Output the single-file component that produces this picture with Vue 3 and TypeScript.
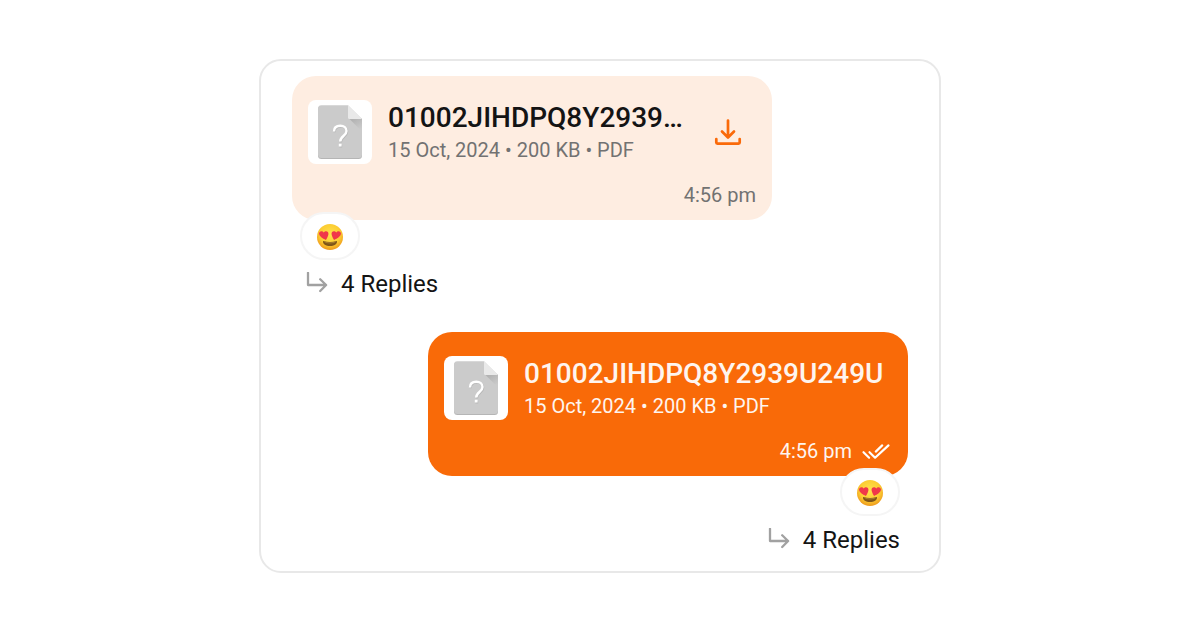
<script setup lang="ts">
interface Message {
  id: number
  direction: 'incoming' | 'outgoing'
  name: string
  details: string
  time: string
  replies: number
}

const messages: Message[] = [
  {
    id: 1,
    direction: 'incoming',
    name: '01002JIHDPQ8Y2939U249U',
    details: '15 Oct, 2024 • 200 KB • PDF',
    time: '4:56 pm',
    replies: 4,
  },
  {
    id: 2,
    direction: 'outgoing',
    name: '01002JIHDPQ8Y2939U249U',
    details: '15 Oct, 2024 • 200 KB • PDF',
    time: '4:56 pm',
    replies: 4,
  },
]
</script>

<template>
  <main class="page">
    <section class="panel">
      <article v-for="m in messages" :key="m.id" class="message" :class="m.direction">
        <div class="bubble">
          <div class="file">
            <span class="thumb">
              <svg width="64" height="64" viewBox="0 0 64 64" aria-hidden="true">
                <defs>
                  <linearGradient :id="`fold-${m.id}`" x1="0.4" y1="0" x2="0.9" y2="0.8">
                    <stop offset="0" stop-color="#b2b2b2" />
                    <stop offset="1" stop-color="#cbcbcb" />
                  </linearGradient>
                </defs>
                <path d="M13.500 6H40l14 14v35.500a3.500 3.500 0 0 1-3.500 3.500h-37a3.500 3.500 0 0 1-3.500-3.500v-46A3.500 3.500 0 0 1 13.500 6Z" fill="#b5b5b5" />
                <path d="M13.500 5.200H40L54 19v35.600a3.500 3.500 0 0 1-3.500 3.500h-37a3.500 3.500 0 0 1-3.500-3.500v-46A3.500 3.500 0 0 1 13.500 5.200Z" fill="#cbcbcb" />
                <path d="M41 18.500h13v13Z" :fill="`url(#fold-${m.id})`" />
                <path d="M40 5.200L54 19H41.500a1.500 1.500 0 0 1-1.500-1.500Z" fill="#e9e9e9" />
                <g fill="none" stroke="#b8b8b8" transform="translate(0.600 0.900)">
                  <path d="M26 31.400c0-3.800 2.600-5.700 6.300-5.700 3.700 0 6.200 2 6.200 5.200 0 5-6.300 5.200-6.300 10.600" stroke-width="2.400" />
                  <path d="M32.200 43.800v2.700" stroke-width="2.800" />
                </g>
                <g fill="none" stroke="#fff">
                  <path d="M26 31.400c0-3.800 2.600-5.700 6.300-5.700 3.700 0 6.200 2 6.200 5.200 0 5-6.300 5.200-6.300 10.600" stroke-width="2.400" />
                  <path d="M32.200 43.800v2.700" stroke-width="2.800" />
                </g>
              </svg>
            </span>
            <div class="info">
              <div class="name">{{ m.name }}</div>
              <div class="details">{{ m.details }}</div>
            </div>
            <button v-if="m.direction === 'incoming'" class="download" type="button" aria-label="Download">
              <svg width="32" height="32" viewBox="0 0 32 32" fill="none" stroke="#fa6a0a" stroke-width="2.700" stroke-linecap="round" stroke-linejoin="round" aria-hidden="true">
                <path d="M16 4.500v16.800M10 15.500l6 6 6-6" />
                <path d="M4.300 23v3.600q0 1.100 1.100 1.100h21.200q1.100 0 1.100-1.100V23" />
              </svg>
            </button>
          </div>
          <div class="status">
            <time>{{ m.time }}</time>
            <svg v-if="m.direction === 'outgoing'" class="ticks" width="32" height="24" viewBox="0 0 32 24" fill="none" stroke="#fff" stroke-width="2.200" stroke-linecap="round" stroke-linejoin="round" aria-hidden="true">
              <path d="M3.500 13.200l5.600 5.500M9.500 13.200l5.600 5.500L28.500 6.400M15.800 12.600l6.400-6.200" />
            </svg>
          </div>
        </div>
        <button class="reaction" type="button" aria-label="Heart eyes reaction">
          <svg width="28" height="28" viewBox="0 0 28 28" aria-hidden="true">
            <defs>
              <radialGradient :id="`face-${m.id}`" cx="0.5" cy="0.4" r="0.6">
                <stop offset="0" stop-color="#ffe34d" />
                <stop offset="0.65" stop-color="#fccd32" />
                <stop offset="1" stop-color="#ee981b" />
              </radialGradient>
            </defs>
            <circle cx="14" cy="14" r="13" :fill="`url(#face-${m.id})`" />
            <path d="M7 18q7 1.800 14 0c.3 3.200-2.800 5-7 5S6.700 21.200 7 18Z" fill="#7f5518" />
            <path d="M8.200 18.500q5.800 1.300 11.600 0-.6 1.900-5.800 1.900t-5.800-1.900Z" fill="#a67c2c" />
            <g fill="#f0384a">
              <path d="M9.900 17C6.500 15.500 3.200 13.400 3 10.600 2.900 8 6.500 7.200 7.700 9.600 9.400 7 12.900 8.200 12.400 11.300 12.100 13.500 11 15.500 9.900 17Z" />
              <path d="M18.100 17C21.500 15.500 24.800 13.400 25 10.600 25.100 8 21.500 7.200 20.300 9.600 18.600 7 15.100 8.200 15.600 11.300 15.900 13.500 17 15.500 18.100 17Z" />
            </g>
          </svg>
        </button>
        <a class="replies" href="#">
          <svg width="24" height="24" viewBox="0 0 24 24" fill="none" stroke="#a1a1a1" stroke-width="2.300" stroke-linecap="round" stroke-linejoin="round" aria-hidden="true">
            <path d="M3 .8V13h18M15.200 7.200l5.900 5.800-5.900 6" />
          </svg>
          <span>{{ m.replies }} Replies</span>
        </a>
      </article>
    </section>
  </main>
</template>

<style>
body {
  margin: 0;
  background: #fff;
}
</style>

<style scoped>
.page {
  display: flex;
  align-items: center;
  justify-content: center;
  min-height: 100vh;
  box-sizing: border-box;
  font-family: Roboto, "Liberation Sans", sans-serif;
  color: #141414;
}

.panel {
  display: flex;
  flex-direction: column;
  gap: 34px;
  box-sizing: border-box;
  width: 100%;
  max-width: 682px;
  padding: 15px 31px 17px;
  border: 2px solid #e8e8e8;
  border-radius: 22px;
}

.message {
  display: flex;
  flex-direction: column;
  align-items: flex-start;
}

.outgoing {
  align-items: flex-end;
}

.bubble {
  box-sizing: border-box;
  width: 100%;
  max-width: 480px;
  padding: 24px 16px 13px;
  border-radius: 24px;
  background: #feede1;
  color: #727272;
}

.outgoing .bubble {
  background: #f96a08;
  color: #fef5ef;
}

.file {
  display: flex;
  align-items: center;
  gap: 16px;
}

.thumb {
  flex: none;
  overflow: hidden;
  height: 64px;
  border-radius: 8px;
  background: #fff;
}

.info {
  flex: 1;
  min-width: 0;
}

.name {
  overflow: hidden;
  font-size: 28px;
  font-weight: 500;
  line-height: 36px;
  color: #141414;
  text-overflow: ellipsis;
  white-space: nowrap;
}

.outgoing .name {
  color: #fef5ef;
}

.details {
  font-size: 20px;
  line-height: 28px;
}

.download {
  flex: none;
  height: 32px;
  margin: 0 12px 0 4px;
  padding: 0;
  border: 0;
  background: none;
  cursor: pointer;
}

.status {
  display: flex;
  align-items: center;
  justify-content: flex-end;
  gap: 8px;
  margin-top: 19px;
  font-size: 20px;
  line-height: 24px;
}

.reaction {
  display: flex;
  align-items: center;
  justify-content: center;
  box-sizing: border-box;
  width: 60px;
  height: 48px;
  margin: -8px 8px 0;
  padding: 2px 0 0;
  border: 2px solid #f5f5f5;
  border-radius: 24px;
  background: #fff;
  cursor: pointer;
}

.replies {
  display: flex;
  align-items: center;
  gap: 12px;
  margin: 10px 8px 0 13px;
  font-size: 24px;
  line-height: 28px;
  color: #141414;
  text-decoration: none;
}
</style>
